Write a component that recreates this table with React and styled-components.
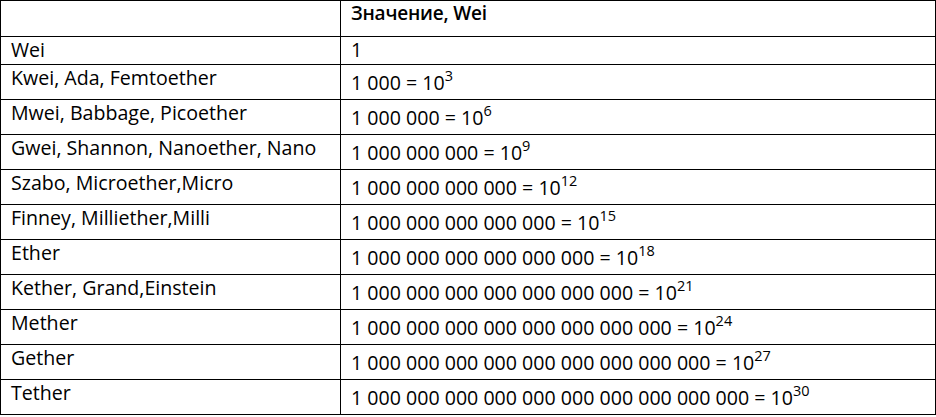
import React from "react";
import styled, { createGlobalStyle } from "styled-components";

const GlobalStyle = createGlobalStyle`
  html, body {
    margin: 0;
    padding: 0;
    background: #ffffff;
  }
  body {
    font-family: "Open Sans", "Noto Sans", sans-serif;
    color: #000000;
  }
`;

const units = [
  { name: "Wei", exp: 0 },
  { name: "Kwei, Ada, Femtoether", exp: 3 },
  { name: "Mwei, Babbage, Picoether", exp: 6 },
  { name: "Gwei, Shannon, Nanoether, Nano", exp: 9 },
  { name: "Szabo, Microether,Micro", exp: 12 },
  { name: "Finney, Milliether,Milli", exp: 15 },
  { name: "Ether", exp: 18 },
  { name: "Kether, Grand,Einstein", exp: 21 },
  { name: "Mether", exp: 24 },
  { name: "Gether", exp: 27 },
  { name: "Tether", exp: 30 },
];

const digits = (exp) => "1" + " 000".repeat(exp / 3);

export default function App() {
  return (
    <>
      <GlobalStyle />
      <Table>
        <Cell $height={36} />
        <HeadCell $height={36}>Значение, Wei</HeadCell>
        {units.map((u) => {
          const height = u.exp ? 35 : 28;
          return (
            <React.Fragment key={u.name}>
              <Cell $height={height} $top={1}>
                {u.name}
              </Cell>
              <Cell $height={height} $top={u.exp ? 6 : 1}>
                {digits(u.exp)}
                {u.exp > 0 && (
                  <>
                    {" = 10"}
                    <Sup>{u.exp}</Sup>
                  </>
                )}
              </Cell>
            </React.Fragment>
          );
        })}
      </Table>
    </>
  );
}

const Table = styled.div`
  display: grid;
  grid-template-columns: 340px 595px;
  width: 936px;
  box-sizing: border-box;
  border-left: 1px solid #000;
  border-top: 1px solid #000;
`;

const Cell = styled.div`
  box-sizing: border-box;
  height: ${(p) => p.$height}px;
  padding: ${(p) => p.$top || 0}px 10px 0 10px;
  border-right: 1px solid #000;
  border-bottom: 1px solid #000;
  font-size: 19.6px;
  line-height: 24px;
  white-space: nowrap;
`;

const HeadCell = styled(Cell)`
  font-size: 19px;
  font-weight: 600;
  letter-spacing: -0.2px;
`;

const Sup = styled.sup`
  font-size: 0.74em;
  line-height: 0;
  vertical-align: 0.62em;
`;
